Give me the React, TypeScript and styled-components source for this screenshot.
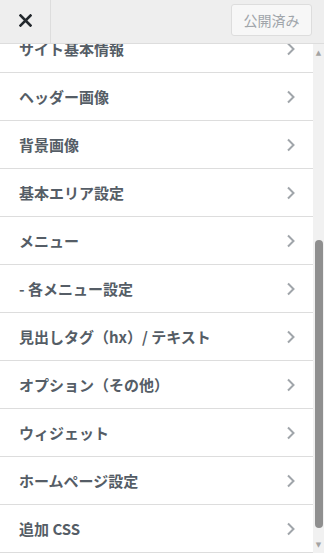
import React, { FC } from 'react';
import styled, { createGlobalStyle } from 'styled-components';

const GlobalStyle = createGlobalStyle`
  html, body {
    margin: 0;
    padding: 0;
    background: #fff;
  }
  body {
    font-family: "Noto Sans CJK JP", "Noto Sans", "Liberation Sans", sans-serif;
  }
`;

const sections = [
  'サイト基本情報',
  'ヘッダー画像',
  '背景画像',
  '基本エリア設定',
  'メニュー',
  '- 各メニュー設定',
  '見出しタグ（hx）/ テキスト',
  'オプション（その他）',
  'ウィジェット',
  'ホームページ設定',
  '追加 CSS',
];

const CloseIcon: FC = () => (
  <svg width="13" height="13" viewBox="0 0 13 13">
    <path d="M1.5 1.5 L11.5 11.5 M11.5 1.5 L1.5 11.5" stroke="#23282d" strokeWidth="2.6" strokeLinecap="square" />
  </svg>
);

const Chevron: FC = () => (
  <svg width="10" height="14" viewBox="0 0 10 14">
    <path d="M2 1.5 L7.5 7 L2 12.5" fill="none" stroke="#a0a5aa" strokeWidth="2" />
  </svg>
);

export default function App() {
  return (
    <>
      <GlobalStyle />
      <Panel>
        <Header>
          <CloseButton>
            <CloseIcon />
          </CloseButton>
          <Spacer />
          <PublishButton disabled>公開済み</PublishButton>
        </Header>
        <Body>
          <Viewport>
            <List>
              {sections.map((title) => (
                <Row key={title}>
                  <RowTitle>{title}</RowTitle>
                  <Chevron />
                </Row>
              ))}
            </List>
          </Viewport>
          <Scrollbar>
            <Arrow>▲</Arrow>
            <Track>
              <Thumb />
            </Track>
            <Arrow>▼</Arrow>
          </Scrollbar>
        </Body>
      </Panel>
    </>
  );
}

const Panel = styled.div`
  width: 324px;
  height: 553px;
  display: flex;
  flex-direction: column;
  overflow: hidden;
  background: #fff;
`;

const Header = styled.div`
  height: 44px;
  flex: 0 0 44px;
  box-sizing: border-box;
  display: flex;
  align-items: center;
  background: #eeeeee;
  border-bottom: 1px solid #dddddd;
  position: relative;
  z-index: 1;
`;

const CloseButton = styled.div`
  width: 51px;
  height: 43px;
  display: flex;
  align-items: center;
  justify-content: center;
  border-right: 1px solid #dddddd;
  padding-bottom: 2px;
  box-sizing: border-box;
`;

const Spacer = styled.div`
  flex: 1;
`;

const PublishButton = styled.button`
  width: 81px;
  height: 32px;
  margin: 0 12px 4px 0;
  border: 1px solid #dddddd;
  border-radius: 3px;
  background: #f7f7f7;
  color: #a0a5aa;
  font-family: "Noto Sans CJK JP", "Noto Sans", sans-serif;
  font-size: 14px;
  padding: 0;
`;

const Body = styled.div`
  flex: 1;
  display: flex;
  min-height: 0;
`;

const Viewport = styled.div`
  flex: 1;
  overflow: hidden;
`;

const List = styled.ul`
  list-style: none;
  margin: -19px 0 0 0;
  padding: 0;
`;

const Row = styled.li`
  height: 48px;
  box-sizing: border-box;
  border-bottom: 1px solid #dddddd;
  display: flex;
  align-items: center;
  justify-content: space-between;
  padding: 0 17px 0 19px;
`;

const RowTitle = styled.span`
  font-size: 15px;
  font-weight: 700;
  color: #555d66;
  letter-spacing: 0;
`;

const Scrollbar = styled.div`
  width: 11px;
  flex: 0 0 11px;
  background: #f1f1f1;
  display: flex;
  flex-direction: column;
`;

const Arrow = styled.div`
  height: 17px;
  display: flex;
  align-items: center;
  justify-content: center;
  font-size: 7px;
  color: #a3a3a3;
  font-family: "DejaVu Sans", sans-serif;
`;

const Track = styled.div`
  flex: 1;
  padding: 179px 1px 0 2px;
`;

const Thumb = styled.div`
  height: 288px;
  border-radius: 4px;
  background: #8f8f8f;
`;
